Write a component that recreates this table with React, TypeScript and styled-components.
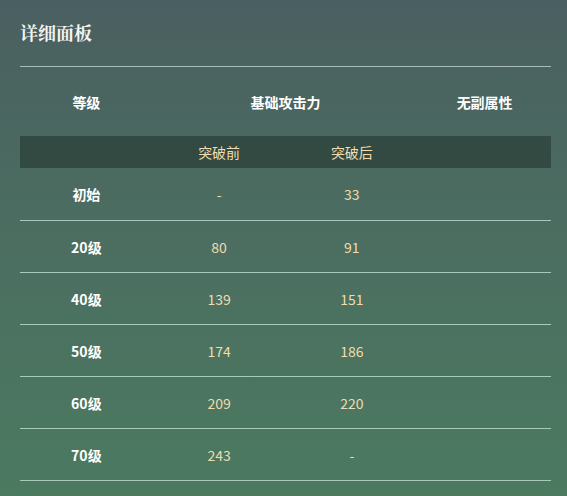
import styled, { createGlobalStyle } from 'styled-components';

const GlobalStyle = createGlobalStyle`
  html, body {
    margin: 0;
    padding: 0;
    height: 100%;
  }
  body {
    background: linear-gradient(180deg, #4a5f61 0%, #4b6d60 45%, #4b7a60 100%);
    font-family: "Noto Sans CJK SC", "Noto Sans", sans-serif;
    min-height: 496px;
  }
`;

const Panel = styled.div`
  padding: 20px 16px 0 20px;
`;

const Title = styled.h2`
  margin: 0;
  height: 24px;
  line-height: 24px;
  font-size: 18px;
  font-weight: 700;
  color: #f4f4f0;
  font-family: "Noto Serif CJK SC", "Noto Sans CJK SC", serif;
  padding-bottom: 22px;
  border-bottom: 1px solid #a9bdb8;
`;

const Table = styled.table`
  width: 100%;
  border-collapse: collapse;
  table-layout: fixed;
`;

const HeadCell = styled.th`
  height: 69px;
  padding: 0;
  font-size: 14px;
  font-weight: 700;
  color: #ffffff;
  text-align: center;
`;

const SubRow = styled.tr`
  background: #324a42;
`;

const SubCell = styled.td`
  height: 32px;
  padding: 0;
  font-size: 14px;
  color: #f0dcae;
  text-align: center;
`;

const Row = styled.tr`
  border-bottom: 1px solid #a8cabd;
`;

const Cell = styled.td<{ $level?: boolean; $first?: boolean }>`
  height: ${p => (p.$first ? '52px' : '51px')};
  padding: 0;
  text-align: center;
  font-size: 14px;
  font-weight: ${p => (p.$level ? 700 : 400)};
  color: ${p => (p.$level ? '#ffffff' : '#f0dcae')};
`;

const rows = [
  { level: '初始', before: '-', after: '33' },
  { level: '20级', before: '80', after: '91' },
  { level: '40级', before: '139', after: '151' },
  { level: '50级', before: '174', after: '186' },
  { level: '60级', before: '209', after: '220' },
  { level: '70级', before: '243', after: '-' },
];

export default function App() {
  return (
    <>
      <GlobalStyle />
      <Panel>
        <Title>详细面板</Title>
        <Table>
          <thead>
            <tr>
              <HeadCell>等级</HeadCell>
              <HeadCell colSpan={2}>基础攻击力</HeadCell>
              <HeadCell>无副属性</HeadCell>
            </tr>
          </thead>
          <tbody>
            <SubRow>
              <SubCell />
              <SubCell>突破前</SubCell>
              <SubCell>突破后</SubCell>
              <SubCell />
            </SubRow>
            {rows.map((r, i) => (
              <Row key={r.level}>
                <Cell $level $first={i === 0}>{r.level}</Cell>
                <Cell $first={i === 0}>{r.before}</Cell>
                <Cell $first={i === 0}>{r.after}</Cell>
                <Cell $first={i === 0} />
              </Row>
            ))}
          </tbody>
        </Table>
      </Panel>
    </>
  );
}
